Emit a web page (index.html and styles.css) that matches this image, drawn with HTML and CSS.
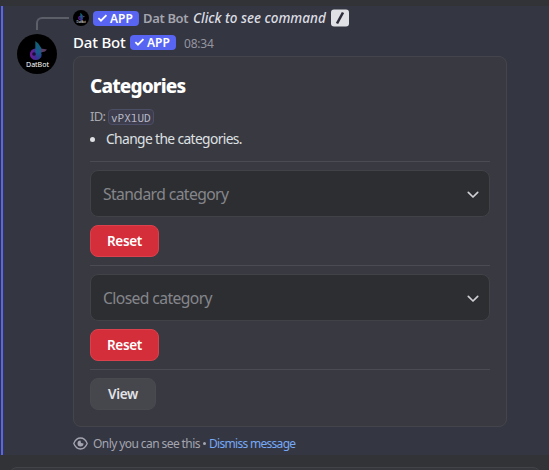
FILE: index.html
```html
<!DOCTYPE html>
<html lang="en">
<head>
<meta charset="utf-8">
<title>Dat Bot</title>
<link rel="stylesheet" href="styles.css">
</head>
<body>
<svg class="defs" width="0" height="0">
  <defs>
    <linearGradient id="note" x1="0" y1="0" x2="1" y2="0">
      <stop offset="0" stop-color="#75189a"/><stop offset=".5" stop-color="#402b94"/><stop offset="1" stop-color="#1b4f8c"/>
    </linearGradient>
    <linearGradient id="stem" x1="0" y1="0" x2="0" y2="1">
      <stop offset="0" stop-color="#12616f"/><stop offset=".6" stop-color="#165a8c"/><stop offset="1" stop-color="#382f8c"/>
    </linearGradient>
    <symbol id="logo" viewBox="0 0 40 40">
      <circle cx="20" cy="20" r="20" fill="#000"/>
      <path d="M18 14.500a5.800 5.800 0 1 0 6.500 6l-3.500-5z" fill="url(#note)"/>
      <path d="M18.300 7l3 2.500 3 4.500v9l-3 2.500-3-5z" fill="url(#stem)"/>
      <path d="M24 14.500l6 1-2 2-4 1z" fill="#583d62"/>
      <circle cx="17" cy="20" r="1.800" fill="#1b0b35"/>
      <text x="20.500" y="32.500" text-anchor="middle" textLength="23" lengthAdjust="spacingAndGlyphs" class="logo-text">DatBot</text>
    </symbol>
    <symbol id="check" viewBox="0 0 12 10"><path d="M1.500 5.200l2.800 2.700L10.300 1.800" fill="none" stroke="#fff" stroke-width="2"/></symbol>
    <symbol id="chevron" viewBox="0 0 12 8"><path d="M1.300 1.300L6 6l4.700-4.700" fill="none" stroke="#d0d0d4" stroke-width="1.700" stroke-linecap="round" stroke-linejoin="round"/></symbol>
  </defs>
</svg>
<main class="message">
  <div class="gutter">
    <div class="spine"></div>
    <svg class="avatar"><use href="#logo"/></svg>
  </div>
  <div class="content">
    <div class="reply">
      <svg class="mini"><use href="#logo"/></svg>
      <span class="tag"><svg><use href="#check"/></svg><b>APP</b></span>
      <span class="reply-name">Dat Bot</span>
      <em>Click to see command</em>
      <svg class="slash" viewBox="0 0 18 18"><rect y=".5" width="18" height="17" rx="3" fill="#e0e1e5"/><path d="M6 14.500L12 3.500" stroke="#2d2e3b" stroke-width="2.600"/></svg>
    </div>
    <header class="author">
      <span class="name">Dat Bot</span>
      <span class="tag"><svg><use href="#check"/></svg><b>APP</b></span>
      <time>08:34</time>
    </header>
    <section class="card">
      <h1>Categories</h1>
      <p class="id"><span>ID:</span><code>vPXlUD</code></p>
      <ul><li><span>Change the categories.</span></li></ul>
      <hr>
      <div class="select"><span>Standard category</span><svg><use href="#chevron"/></svg></div>
      <button class="danger">Reset</button>
      <hr>
      <div class="select"><span>Closed category</span><svg><use href="#chevron"/></svg></div>
      <button class="danger">Reset</button>
      <hr>
      <button class="view">View</button>
    </section>
    <footer>
      <svg viewBox="0 0 15 13"><path d="M.8 6.500C2.200 3 4.600 1 7.500 1s5.300 2 6.700 5.500C12.800 10 10.400 12 7.500 12S2.200 10 .8 6.500z" fill="none" stroke="#a4a5b0" stroke-width="1.300"/><path d="M7.500 3.500A3 3 0 1 0 10.500 6.500L8 6z" fill="#a4a5b0"/></svg>
      <span class="only">Only you can see this</span><i class="dot"></i><a>Dismiss message</a>
    </footer>
  </div>
</main>
<div class="composer"></div>
</body>
</html>
```
FILE: styles.css
```css
* { box-sizing: border-box; }
body { margin: 0; padding: 6px 0 0 1px; width: 549px; height: 470px; overflow: hidden; background: #323337; color: #dfe0e3; font-family: "Noto Sans", sans-serif; }
.defs { position: absolute; }
.message { display: flex; height: 449px; background: #343642; border-left: 2px solid #5865f2; }
.gutter { width: 70px; flex: none; padding: 11px 0 0 14px; }
.spine { width: 33px; height: 13px; margin-left: 19px; border: solid #5c5e68; border-width: 2px 0 0 2px; border-radius: 6px 0 0 0; }
.avatar { display: block; width: 40px; height: 40px; margin-top: 4px; }
.logo-text { fill: #fff; font: 6.500px "Noto Sans", sans-serif; }
.content { width: 434px; }
.reply { display: flex; align-items: center; height: 24px; font-size: 13px; line-height: 18px; white-space: nowrap; }
.mini { width: 16px; height: 16px; margin-right: 4px; }
.tag { display: flex; align-items: center; width: 46px; height: 15px; padding-left: 4px; border-radius: 4px; background: #5865f2; color: #fff; flex: none; }
.tag svg { width: 11px; height: 10px; margin-right: 2px; }
.tag b { font-size: 12px; line-height: 15px; font-weight: 600; }
.reply-name { width: 46px; margin-left: 4px; color: #a4a5ae; font-weight: 600; letter-spacing: -.35px; }
em { width: 136px; margin-left: 4px; color: #dcdde3; font-size: 13.500px; font-weight: 500; letter-spacing: 0; }
.slash { width: 18px; height: 18px; margin-left: 2px; }
.author { display: flex; align-items: center; height: 26px; line-height: 22px; white-space: nowrap; }
.name { width: 53px; margin-top: -2px; color: #fff; font-size: 15px; font-weight: 500; letter-spacing: -.2px; }
.author .tag { margin: -2px 0 0 4px; }
time { margin-left: 8px; padding-top: 1px; color: #94959f; font-size: 12px; letter-spacing: -.2px; }
.card { height: 371px; padding: 15px 16px; background: #393a41; border: 1px solid #44454c; border-radius: 8px; }
h1 { margin: 0; height: 30px; color: #fff; font-size: 19px; line-height: 29px; font-weight: 800; letter-spacing: -.85px; }
.id { display: flex; align-items: center; height: 22px; margin: 4px 0 0; color: #a7a8af; font-size: 13px; line-height: 20px; }
.id span { width: 18px; margin-top: -2px; letter-spacing: -.7px; }
code { width: 46px; height: 16px; padding-left: 2px; border: 1px solid #4c4d66; border-radius: 4px; background: #3d3d4d; color: #b9bac5; font: 11px/15px "Noto Sans Mono", "DejaVu Sans Mono", monospace; }
ul { margin: 0; padding: 0; height: 22px; list-style: none; }
li { display: flex; align-items: center; font-size: 13.800px; line-height: 22px; letter-spacing: -.62px; }
li::before { content: ""; width: 5px; height: 5px; margin-right: 11px; border-radius: 50%; background: #dfe0e3; }
hr { height: 1px; margin: 11px 0 8px; border: 0; background: #4b4b54; }
button + hr { margin: 8px 0; }
.select { display: flex; align-items: center; justify-content: space-between; height: 47px; padding: 0 10px 0 12px; border: 1px solid #414247; border-radius: 8px; background: #2d2e32; color: #85868b; font-size: 15.700px; letter-spacing: -.6px; }
.select svg { width: 12px; height: 8px; margin-top: 2px; }
button { display: block; height: 32px; padding: 0; border-radius: 8px; font: 600 13.500px "Noto Sans", sans-serif; }
.danger { width: 69px; margin-top: 8px; border: 1px solid #db414d; background: #d32e39; color: #fff; letter-spacing: -.3px; }
.view { width: 66px; border: 1px solid #494a50; background: #46474d; color: #e3e3e6; letter-spacing: -.3px; }
footer { display: flex; align-items: center; height: 17px; margin-top: 8px; font-size: 12px; white-space: nowrap; color: #a4a5af; letter-spacing: -.58px; }
footer svg { width: 15px; height: 13px; margin-right: 5px; }
.only { width: 107px; }
.dot { width: 3px; height: 3px; margin: 0 3px; border-radius: 50%; background: #a4a5af; }
footer a { color: #76a9f6; letter-spacing: -.7px; }
.composer { height: 20px; margin: 12px 8px 0 8px; border: 1px solid #424348; border-radius: 8px 8px 0 0; background: #36373c; }
```
